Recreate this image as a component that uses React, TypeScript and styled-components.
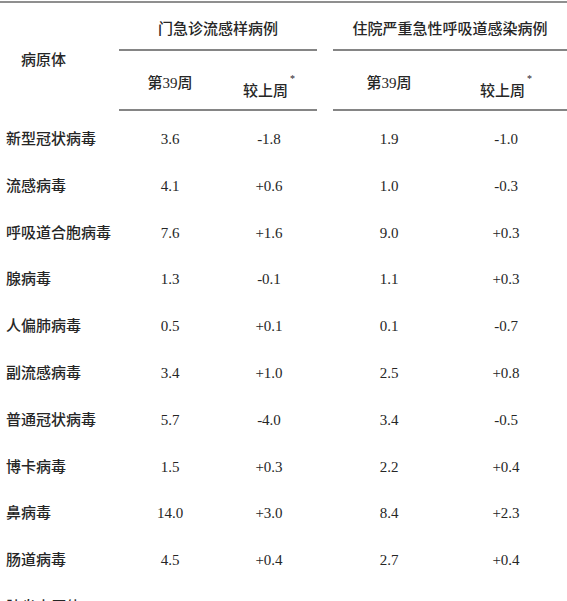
import styled, { createGlobalStyle } from 'styled-components';

const GlobalStyle = createGlobalStyle`
  html, body {
    margin: 0;
    padding: 0;
    background: #ffffff;
  }
  body {
    font-family: "Liberation Serif", "Noto Sans CJK SC", serif;
    color: #262626;
  }
`;

const Sheet = styled.div`
  width: 567px;
  height: 601px;
  overflow: hidden;
  padding-top: 1px;
  box-sizing: border-box;
`;

const Table = styled.table`
  width: 567px;
  table-layout: fixed;
  border-collapse: separate;
  border-spacing: 0;
  border-top: 2px solid #8f8f8f;
  font-size: 15px;
  line-height: 20px;
`;

const GroupTitle = styled.th`
  font-weight: 500;
  text-align: center;
  padding: 16px 0 10px;
  border-bottom: 2px solid #858585;
  white-space: nowrap;
`;

const Spacer = styled.th`
  padding: 0;
`;

const NameHead = styled.th`
  font-weight: 500;
  text-align: left;
  vertical-align: top;
  padding: 47px 0 0 21px;
`;

const SubHead = styled.th<{ $drop?: boolean }>`
  font-weight: 500;
  text-align: center;
  padding: ${(p) => (p.$drop ? '28px 0 8px' : '21px 0 15px')};
  border-bottom: 2px solid #858585;
  white-space: nowrap;
`;

const Star = styled.sup`
  font-size: 10px;
  line-height: 0;
  vertical-align: 14px;
  margin-left: 2px;
`;

const NameCell = styled.td`
  font-weight: 500;
  text-align: left;
  padding: 18px 0 8.8px 6px;
  white-space: nowrap;
`;

const Value = styled.td`
  text-align: center;
  padding: 18px 0 8.8px;
  white-space: nowrap;
`;

type Row = { name: string; values: [string, string, string, string] };

const rows: Row[] = [
  { name: '新型冠状病毒', values: ['3.6', '-1.8', '1.9', '-1.0'] },
  { name: '流感病毒', values: ['4.1', '+0.6', '1.0', '-0.3'] },
  { name: '呼吸道合胞病毒', values: ['7.6', '+1.6', '9.0', '+0.3'] },
  { name: '腺病毒', values: ['1.3', '-0.1', '1.1', '+0.3'] },
  { name: '人偏肺病毒', values: ['0.5', '+0.1', '0.1', '-0.7'] },
  { name: '副流感病毒', values: ['3.4', '+1.0', '2.5', '+0.8'] },
  { name: '普通冠状病毒', values: ['5.7', '-4.0', '3.4', '-0.5'] },
  { name: '博卡病毒', values: ['1.5', '+0.3', '2.2', '+0.4'] },
  { name: '鼻病毒', values: ['14.0', '+3.0', '8.4', '+2.3'] },
  { name: '肠道病毒', values: ['4.5', '+0.4', '2.7', '+0.4'] },
  { name: '肺炎支原体', values: ['0.3', '-0.3', '0.0', '+0.1'] },
];

export default function App() {
  return (
    <>
      <GlobalStyle />
      <Sheet>
        <Table>
          <colgroup>
            <col style={{ width: 119 }} />
            <col style={{ width: 102 }} />
            <col style={{ width: 96 }} />
            <col style={{ width: 16 }} />
            <col style={{ width: 112 }} />
            <col style={{ width: 122 }} />
          </colgroup>
          <thead>
            <tr>
              <NameHead rowSpan={2}>病原体</NameHead>
              <GroupTitle colSpan={2}>门急诊流感样病例</GroupTitle>
              <Spacer rowSpan={2} />
              <GroupTitle colSpan={2}>住院严重急性呼吸道感染病例</GroupTitle>
            </tr>
            <tr>
              <SubHead>第39周</SubHead>
              <SubHead $drop>
                较上周<Star>*</Star>
              </SubHead>
              <SubHead>第39周</SubHead>
              <SubHead $drop>
                较上周<Star>*</Star>
              </SubHead>
            </tr>
          </thead>
          <tbody>
            {rows.map((r) => (
              <tr key={r.name}>
                <NameCell>{r.name}</NameCell>
                <Value>{r.values[0]}</Value>
                <Value>{r.values[1]}</Value>
                <td />
                <Value>{r.values[2]}</Value>
                <Value>{r.values[3]}</Value>
              </tr>
            ))}
          </tbody>
        </Table>
      </Sheet>
    </>
  );
}
